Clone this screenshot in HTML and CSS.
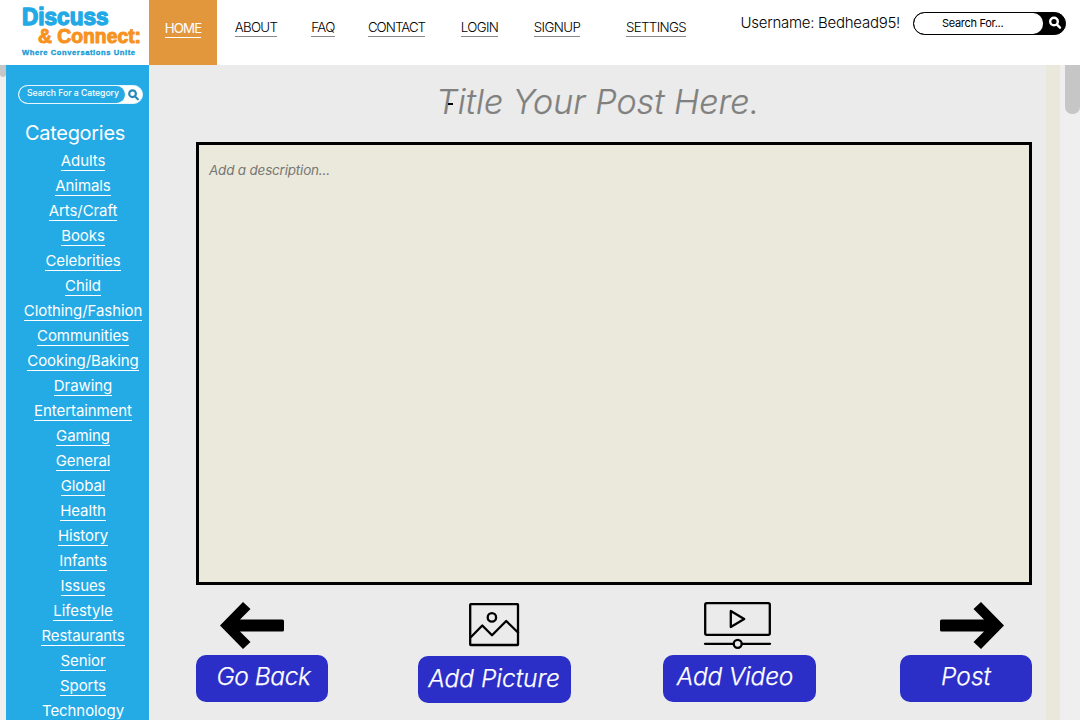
FILE: index.html
```html
<!DOCTYPE html>
<html lang="en">
<head>
<meta charset="utf-8">
<title>Discuss &amp; Connect</title>
<link rel="stylesheet" href="styles.css">
</head>
<body>
<header class="header">
  <svg class="logo" width="149" height="65" viewBox="0 0 149 65" role="img">
    <text class="logo-blue" x="22" y="24.800" font-size="23.5" textLength="86.500" lengthAdjust="spacingAndGlyphs">Discuss</text>
    <text class="logo-orange" x="38" y="42.800" font-size="19.300" textLength="103" lengthAdjust="spacingAndGlyphs">&amp; Connect:</text>
    <text class="logo-tag" x="22" y="55" font-size="7.6" textLength="113" lengthAdjust="spacing">Where Conversations Unite</text>
  </svg>
  <nav class="nav">
    <a class="home"><span class="link">HOME</span></a>
    <a class="link about">ABOUT</a>
    <a class="link faq">FAQ</a>
    <a class="link contact">CONTACT</a>
    <a class="link login">LOGIN</a>
    <a class="link signup">SIGNUP</a>
    <a class="link settings">SETTINGS</a>
  </nav>
  <div class="username">Username: Bedhead95!</div>
  <div class="search">
    <span class="search-field">Search For...</span>
    <svg class="search-icon" width="14" height="14" viewBox="0 0 14 14"><circle cx="5" cy="5.500" r="3.8"/><path d="M8 8.600L11 11.700"/></svg>
  </div>
</header>
<div class="body">
  <div class="left-gutter"><div class="left-thumb"></div></div>
  <aside class="sidebar">
    <div class="cat-search">
      <span class="cat-field">Search For a Category</span>
      <svg class="cat-icon" width="12" height="12" viewBox="0 0 14 14"><circle cx="5.3" cy="5.5" r="3.9"/><path d="M8.200 8.600L11.500 12"/></svg>
    </div>
    <h2 class="cat-title">Categories</h2>
    <ul class="cats">
      <li><a>Adults</a></li><li><a>Animals</a></li><li><a>Arts/Craft</a></li><li><a>Books</a></li>
      <li><a>Celebrities</a></li><li><a>Child</a></li><li><a>Clothing/Fashion</a></li><li><a>Communities</a></li>
      <li><a>Cooking/Baking</a></li><li><a>Drawing</a></li><li><a>Entertainment</a></li><li><a>Gaming</a></li>
      <li><a>General</a></li><li><a>Global</a></li><li><a>Health</a></li><li><a>History</a></li>
      <li><a>Infants</a></li><li><a>Issues</a></li><li><a>Lifestyle</a></li><li><a>Restaurants</a></li>
      <li><a>Senior</a></li><li><a>Sports</a></li><li><a>Technology</a></li>
    </ul>
  </aside>
  <main class="main">
    <div class="title-row"><h1 class="title">Title Your Post Here.</h1><span class="caret"></span></div>
    <div class="description">Add a description...</div>
    <div class="actions">
      <div class="action">
        <svg class="arrow" width="132" height="70" viewBox="196 585 132 70"><path d="M220 625.500L243 602L250.500 609L240 619.500H282.500Q284 619.500 284 621V630Q284 631.500 282.500 631.500H240L250.500 642L243 649Z"/></svg>
        <button class="button back">Go Back</button>
      </div>
      <div class="action add-picture">
        <svg class="line-icon" width="153" height="71" viewBox="418 585 153 71"><rect x="470.200" y="604.200" width="47.800" height="40.800" rx=".5"/><circle cx="491.900" cy="617.400" r="4.200"/><path d="M471 637L482.300 625.500L492 635.300L506.200 621L518 632.500"/></svg>
        <button class="button wide picture">Add Picture</button>
      </div>
      <div class="action add-video">
        <svg class="line-icon" width="153" height="70" viewBox="663 585 153 70"><rect x="705.200" y="603.200" width="64.600" height="31.600" rx="1.500"/><path d="M730.800 611V627L744.200 619ZM705 643.800H733.500M742 643.800H770"/><circle cx="737.700" cy="643.800" r="4"/></svg>
        <button class="button wide video">Add Video</button>
      </div>
      <div class="action post">
        <svg class="arrow" width="132" height="70" viewBox="900 585 132 70"><path d="M1004 625.500L981 602L973.500 609L984 619.500H941.500Q940 619.500 940 621V630Q940 631.500 941.500 631.500H984L973.500 642L981 649Z"/></svg>
        <button class="button">Post</button>
      </div>
    </div>
  </main>
  <div class="stripe"></div>
  <div class="scrollbar"><div class="thumb"></div></div>
</div>
</body>
</html>
```
FILE: styles.css
```css
* { box-sizing: border-box; }
body { margin: 0; width: 1080px; height: 720px; overflow: hidden; background: #ebebeb; font-family: Inter, "Liberation Sans", sans-serif; }
.header { display: flex; height: 65px; background: #fff; }
.logo { flex: none; font-family: "Liberation Sans", sans-serif; font-weight: 700; stroke-linejoin: round; }
.logo-blue { fill: #22a9e6; stroke: #22a9e6; stroke-width: 1.4px; }
.logo-orange { fill: #f7921e; stroke: #f7921e; stroke-width: 1px; }
.logo-tag { fill: #1c9bd6; stroke: #1c9bd6; stroke-width: .35px; }
.nav { display: flex; width: 591px; flex: none; font-size: 13.3px; font-weight: 300; color: #000; }
.home { width: 68px; height: 65px; background: #e3973d; color: #fff; display: flex; justify-content: center; padding-top: 1px; }
.link { height: 17px; margin-top: 20px; line-height: 15px; border-bottom: 1px solid #888; white-space: nowrap; flex: none; display: flex; justify-content: center; }
.home .link { width: 36px; border-color: #fff; letter-spacing: -.85px; font-weight: 400; }
.about { width: 42px; margin-left: 18px; letter-spacing: -.7px; }
.faq { width: 24px; margin-left: 34px; letter-spacing: -.6px; }
.contact { width: 57px; margin-left: 33px; letter-spacing: -.95px; }
.login { width: 37px; margin-left: 36px; letter-spacing: -.6px; }
.signup { width: 46px; margin-left: 36px; letter-spacing: -.6px; }
.settings { width: 60px; margin-left: 46px; letter-spacing: -.65px; }
.username { width: 173px; flex: none; padding: 13px 0 0 .5px; font-size: 15px; line-height: 20px; font-weight: 300; letter-spacing: -.27px; white-space: nowrap; }
.search { width: 153px; height: 23px; margin-top: 12px; border: 1.5px solid #000; border-radius: 12px; background: #000; display: flex; flex: none; overflow: hidden; }
.search-field { width: 129px; height: 21px; border-radius: 10px; background: #fff; font-size: 11px; line-height: 21px; padding-left: 28px; white-space: nowrap; letter-spacing: -.3px; }
.search-icon { margin: 3px 0 0 6px; fill: none; stroke: #fff; stroke-width: 2.4px; stroke-linecap: round; }
.body { display: flex; height: 655px; }
.left-gutter { width: 6px; background: #efeff0; }
.left-thumb { height: 12px; background: #c5c5c5; border-radius: 0 0 4px 4px; }
.sidebar { width: 143px; background: #24aae5; color: #fff; padding-top: 20px; flex: none; overflow: hidden; }
.cat-search { width: 125px; height: 19px; margin-left: 12px; border: 1px solid #e8f6fd; border-radius: 10px; background: #fff; display: flex; overflow: hidden; }
.cat-field { width: 106px; height: 17px; border-radius: 9px; background: #24aae5; font-size: 8.7px; line-height: 15px; padding-left: 8px; font-weight: 500; letter-spacing: -.04px; white-space: nowrap; }
.cat-icon { margin: 3px 0 0 3px; fill: none; stroke: #2488ba; stroke-width: 2.5px; stroke-linecap: round; }
.cat-title { margin: 16px 0 3px 19px; font-size: 20px; line-height: 26px; font-weight: 400; letter-spacing: -.3px; white-space: nowrap; }
.cats { list-style: none; margin: 0; padding: 0 0 0 11px; font-size: 15px; letter-spacing: -.08px; }
.cats li { height: 25px; display: flex; justify-content: center; }
.cats a { height: 22px; line-height: 24px; border-bottom: 1px solid #fff; white-space: nowrap; }
.main { width: 897px; flex: none; padding: 0 14px 0 47px; background: #ebebeb; }
.title-row { height: 77px; padding: 15px 0 0 240px; position: relative; }
.title { margin: 0; font-size: 34px; line-height: 43px; font-weight: 300; font-style: italic; letter-spacing: .05px; color: #80807e; -webkit-text-stroke: .2px #80807e; white-space: nowrap; }
.caret { position: absolute; left: 252px; top: 38px; width: 5px; height: 2px; background: #000; }
.description { height: 443px; border: 3px solid #000; background: #ebe9dc; padding: 15px 0 0 10px; font-size: 13.5px; line-height: 20px; font-style: italic; letter-spacing: -.2px; color: #777773; }
.actions { display: flex; }
.action { display: flex; flex-direction: column; }
.action svg { display: block; }
.add-picture { margin-left: 90px; }
.add-video { margin-left: 92px; }
.post { margin-left: 84px; }
.line-icon { fill: none; stroke: #000; stroke-width: 2.3px; stroke-linejoin: round; stroke-linecap: round; }
.button { width: 132px; height: 47px; border: 0; border-radius: 10px; background: #2c2ec8; color: #fff; padding: 0 0 5px; font-family: inherit; font-size: 24.5px; line-height: 30px; font-style: italic; font-weight: 300; -webkit-text-stroke: .25px #fff; white-space: nowrap; }
.wide { width: 153px; }
.back { padding-left: 3px; letter-spacing: -.4px; }
.picture { padding: 0 1px 4px 0; letter-spacing: 0; }
.video { padding-right: 9px; letter-spacing: -.2px; }
.stripe { width: 14px; background: #e9e8da; }
.scrollbar { width: 20px; background: #efefef; padding-left: 5px; }
.thumb { height: 49px; background: #c6c6c6; border-radius: 0 0 7px 7px; }
```
